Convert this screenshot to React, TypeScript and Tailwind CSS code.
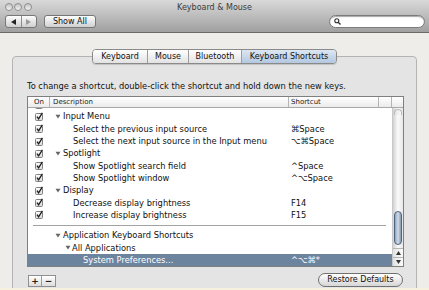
import React from 'react';

type Row = {
  text: string;
  shortcut?: string;
  check?: boolean;
  kind: 'group' | 'child' | 'sub' | 'leaf';
  selected?: boolean;
};

const rows: Row[] = [
  { text: '', check: true, kind: 'child' },
  { text: 'Input Menu', check: true, kind: 'group' },
  { text: 'Select the previous input source', shortcut: '⌘Space', check: true, kind: 'child' },
  { text: 'Select the next input source in the Input menu', shortcut: '⌥⌘Space', check: true, kind: 'child' },
  { text: 'Spotlight', check: true, kind: 'group' },
  { text: 'Show Spotlight search field', shortcut: '^Space', check: true, kind: 'child' },
  { text: 'Show Spotlight window', shortcut: '^⌥Space', check: true, kind: 'child' },
  { text: 'Display', check: true, kind: 'group' },
  { text: 'Decrease display brightness', shortcut: 'F14', check: true, kind: 'child' },
  { text: 'Increase display brightness', shortcut: 'F15', check: true, kind: 'child' },
];

const appRows: Row[] = [
  { text: 'Application Keyboard Shortcuts', kind: 'group' },
  { text: 'All Applications', kind: 'sub' },
  { text: 'System Preferences...', shortcut: '^⌥⌘*', kind: 'leaf', selected: true },
];

function Checkbox() {
  return (
    <svg width="9" height="9" viewBox="0 0 9 9">
      <defs>
        <linearGradient id="cbg" x1="0" y1="0" x2="0" y2="1">
          <stop offset="0" stopColor="#ffffff" />
          <stop offset="1" stopColor="#d8d8d8" />
        </linearGradient>
      </defs>
      <rect x="0.5" y="1.5" width="7" height="7" rx="1" fill="url(#cbg)" stroke="#808080" />
      <path d="M2 4.6 L3.6 6.8 L7.4 0.9" fill="none" stroke="#1a1a1a" strokeWidth="1.3" />
    </svg>
  );
}

function Triangle() {
  return (
    <svg width="6" height="5" viewBox="0 0 6 5" className="shrink-0">
      <path d="M0.5 0.8 H5.5 L3 4.4 Z" fill="#666" />
    </svg>
  );
}

function TableRow({ row }: { row: Row }) {
  return (
    <div
      className={`flex h-[12.3px] items-center text-[8.3px] leading-[10px] ${
        row.selected ? 'bg-[#6d849f] text-white' : 'text-[#111]'
      }`}
    >
      <div className="flex w-[22px] justify-center">{row.check && <Checkbox />}</div>
      <div className="flex w-[239px] items-center whitespace-nowrap">
        {row.kind === 'group' && (
          <div className="flex items-center pl-[5px]">
            <Triangle />
            <span className="ml-[2px]">{row.text}</span>
          </div>
        )}
        {row.kind === 'child' && <span className="pl-[23px]">{row.text}</span>}
        {row.kind === 'sub' && (
          <div className="flex items-center pl-[15px]">
            <Triangle />
            <span className="ml-[1px]">{row.text}</span>
          </div>
        )}
        {row.kind === 'leaf' && <span className="pl-[33px]">{row.text}</span>}
      </div>
      <div className="w-[90px] whitespace-nowrap pl-[2px]">{row.shortcut}</div>
    </div>
  );
}

function Scroller() {
  return (
    <div className="flex w-[11px] flex-col border-l border-[#c8c8c8] bg-gradient-to-r from-[#d2d2d2] via-[#fbfbfb] to-[#e6e6e6]">
      <div className="mx-[1px] mt-[1px] h-[6px] rounded-t-full border border-b-0 border-[#b9b9b9] bg-gradient-to-r from-[#e4e4e4] to-[#fafafa]" />
      <div className="flex-1" />
      {/* thumb */}
      <div className="mx-[1px] h-[34px] rounded-full border border-[#4e6581] bg-gradient-to-r from-[#8ea2ba] via-[#d3dde9] to-[#8499b3]" />
      <div className="h-[3px]" />
      <div className="flex h-[9px] items-center justify-center border-t border-[#b5b5b5] bg-gradient-to-r from-[#e2e2e2] to-[#fdfdfd]">
        <svg width="5" height="4" viewBox="0 0 5 4">
          <path d="M0 4 L2.5 0 L5 4 Z" fill="#333" />
        </svg>
      </div>
      <div className="flex h-[9px] items-center justify-center border-t border-[#b5b5b5] bg-gradient-to-r from-[#e2e2e2] to-[#fdfdfd]">
        <svg width="5" height="4" viewBox="0 0 5 4">
          <path d="M0 0 L5 0 L2.5 4 Z" fill="#333" />
        </svg>
      </div>
    </div>
  );
}

export default function App() {
  const tabs = [
    { label: 'Keyboard', w: 'w-[54px]' },
    { label: 'Mouse', w: 'w-[41px]' },
    { label: 'Bluetooth', w: 'w-[53px]' },
    { label: 'Keyboard Shortcuts', w: 'w-[95px]', active: true },
  ];

  return (
    <div className="h-[290px] w-[429px] overflow-hidden bg-[#f5f1de] font-['DejaVu_Sans',sans-serif]">
      <div className="flex h-[288px] flex-col overflow-hidden bg-[#eeede9]">
        {/* title bar + toolbar */}
        <div className="flex h-[33px] flex-col border-b border-[#6a6a6a] bg-gradient-to-b from-[#d9d9d9] to-[#a0a0a0]">
          <div className="grid h-[14px] grid-cols-[1fr_auto_1fr] items-center">
            <div className="flex gap-[1.3px] pl-[5px]">
              {[0, 1, 2].map((i) => (
                <div
                  key={i}
                  className="h-[8px] w-[8px] rounded-full border border-[#8e8e8e] bg-gradient-to-b from-[#c4c4c4] to-[#f2f2f2]"
                />
              ))}
            </div>
            <div className="pt-[2px] text-[8px] leading-[10px] text-[#3c3c3c]">Keyboard &amp; Mouse</div>
            <div />
          </div>
          <div className="mt-[1px] flex items-center pl-[5px] pr-[4px]">
            <div className="flex h-[13px] w-[32px] overflow-hidden rounded-[3px] border border-[#777] bg-gradient-to-b from-[#fdfdfd] to-[#cfcfcf]">
              <div className="flex flex-1 items-center justify-center border-r border-[#8c8c8c]">
                <svg width="5" height="6" viewBox="0 0 5 6">
                  <path d="M5 0 V6 L0 3 Z" fill="#222" />
                </svg>
              </div>
              <div className="flex flex-1 items-center justify-center">
                <svg width="5" height="6" viewBox="0 0 5 6">
                  <path d="M0 0 V6 L5 3 Z" fill="#9a9a9a" />
                </svg>
              </div>
            </div>
            <div className="ml-[7px] flex h-[13px] w-[52px] items-center justify-center rounded-[3px] border border-[#777] bg-gradient-to-b from-[#fdfdfd] to-[#d0d0d0] text-[8px] text-[#111]">
              Show All
            </div>
            <div className="ml-auto flex h-[13px] w-[96px] items-center rounded-full border border-[#7b7b7b] bg-white pl-[4px] shadow-[inset_0_1px_1px_rgba(0,0,0,0.35)]">
              <svg width="7" height="7" viewBox="0 0 7 7">
                <circle cx="2.8" cy="2.8" r="2" fill="none" stroke="#333" strokeWidth="1.1" />
                <path d="M4.2 4.2 L6.5 6.5" stroke="#333" strokeWidth="1.4" />
              </svg>
            </div>
          </div>
        </div>

        {/* pane */}
        <div className="flex-1 overflow-hidden px-[12px] pt-[16px]">
          <div className="relative z-10 flex h-[15px] justify-center">
            <div className="flex overflow-hidden rounded-[4px] border border-[#8a8a8a] shadow-[0_1px_1px_rgba(0,0,0,0.15)]">
              {tabs.map((t, i) => (
                <div
                  key={t.label}
                  className={`flex items-center justify-center text-[8px] text-[#111] ${t.w} ${
                    i > 0 ? 'border-l border-[#9d9d9d]' : ''
                  } ${
                    t.active
                      ? 'bg-gradient-to-b from-[#dde7f3] to-[#b3c8df]'
                      : 'bg-gradient-to-b from-[#ffffff] to-[#e2e2e2]'
                  }`}
                >
                  {t.label}
                </div>
              ))}
            </div>
          </div>

          <div className="-mt-[8px] h-[260px] rounded-[4px] border border-[#b4b4b4] bg-[#e4e4e4] pl-[14px] pt-[24px]">
            <div className="text-[8.3px] leading-[10px] text-[#111]">
              To change a shortcut, double-click the shortcut and hold down the new keys.
            </div>

            <div className="mt-[5px] w-[377px] border border-[#7f7f7f] bg-white">
              {/* header */}
              <div className="flex h-[11px] items-center border-b border-[#a8a8a8] bg-gradient-to-b from-[#ffffff] to-[#ebebeb] text-[7px] text-[#222]">
                <div className="h-full w-[22px] border-r border-[#b4b4b4] pl-[6px] leading-[10px]">On</div>
                <div className="h-full w-[239px] border-r border-[#b4b4b4] pl-[3px] leading-[10px]">Description</div>
                <div className="h-full w-[90px] border-r border-[#b4b4b4] pl-[2px] leading-[10px]">Shortcut</div>
                <div className="h-full w-[13px] border-r border-[#b4b4b4]" />
                <div className="h-full flex-1" />
              </div>

              {/* body */}
              <div className="flex h-[158px]">
                <div className="w-[364px] overflow-hidden">
                  <div className="-mt-[10px]">
                    {rows.map((r, i) => (
                      <TableRow key={i} row={r} />
                    ))}
                  </div>
                  <div className="flex h-[8.3px] items-center">
                    <div className="ml-[5px] h-px w-[353px] bg-[#a3a3a3]" />
                  </div>
                  {appRows.map((r) => (
                    <TableRow key={r.text} row={r} />
                  ))}
                </div>
                <Scroller />
              </div>
            </div>

            <div className="mt-[6px] flex h-[14px] w-[377px] items-end justify-between">
              <div className="ml-[1px] flex h-[12px] border border-[#8f8f8f] bg-gradient-to-b from-[#ffffff] to-[#dcdcdc] text-[9px] leading-[10px] text-[#222]">
                <div className="flex w-[13px] items-center justify-center border-r border-[#9a9a9a] font-bold">+</div>
                <div className="flex w-[13px] items-center justify-center font-bold">−</div>
              </div>
              <div className="mr-[1px] flex h-[14px] w-[85px] items-center justify-center rounded-full border border-[#707070] bg-gradient-to-b from-[#ffffff] to-[#d6d6d6] text-[8px] text-[#111]">
                Restore Defaults
              </div>
            </div>
          </div>
        </div>
      </div>
    </div>
  );
}
